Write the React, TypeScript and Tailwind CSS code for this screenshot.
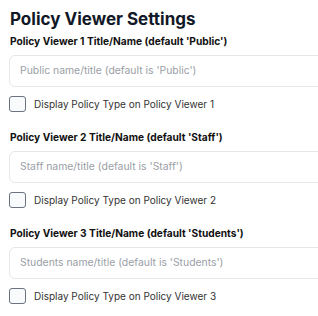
import React from "react";

const sections = [
  { n: 1, label: "Policy Viewer 1 Title/Name (default 'Public')", ph: "Public name/title (default is 'Public')" },
  { n: 2, label: "Policy Viewer 2 Title/Name (default 'Staff')", ph: "Staff name/title (default is 'Staff')" },
  { n: 3, label: "Policy Viewer 3 Title/Name (default 'Students')", ph: "Students name/title (default is 'Students')" },
];

export default function App() {
  return (
    <div className="w-[318px] h-[316px] overflow-hidden bg-white pl-[9px] pt-[6px] text-[#111827]" style={{ fontFamily: "Inter, 'Noto Sans', sans-serif" }}>
      <h1 className="text-[17px] font-bold leading-[26px] pl-px">Policy Viewer Settings</h1>
      <div className="flex flex-col">
        {sections.map((s, i) => (
          <div key={s.n} className={i === 0 ? "pt-0" : "pt-[16px]"}>
            <div className="text-[10.2px] font-bold leading-[16px] pl-px pt-px text-[#111111]">{s.label}</div>
            <div className="mt-[6px] w-[340px] h-[32px] rounded-[6px] border border-[#e5e7eb] bg-white flex items-center pl-[10px]">
              <span className="text-[10.4px] text-[#9a9ea6]">{s.ph}</span>
            </div>
            <div className="mt-[9px] flex items-center gap-[8px] h-[16px]">
              <div className="w-[17px] h-[16px] rounded-[3px] border border-[#6b7280] bg-[#f9fafb]" />
              <span className="text-[10px] leading-[16px] text-[#333333]">Display Policy Type on Policy Viewer {s.n}</span>
            </div>
          </div>
        ))}
      </div>
    </div>
  );
}
